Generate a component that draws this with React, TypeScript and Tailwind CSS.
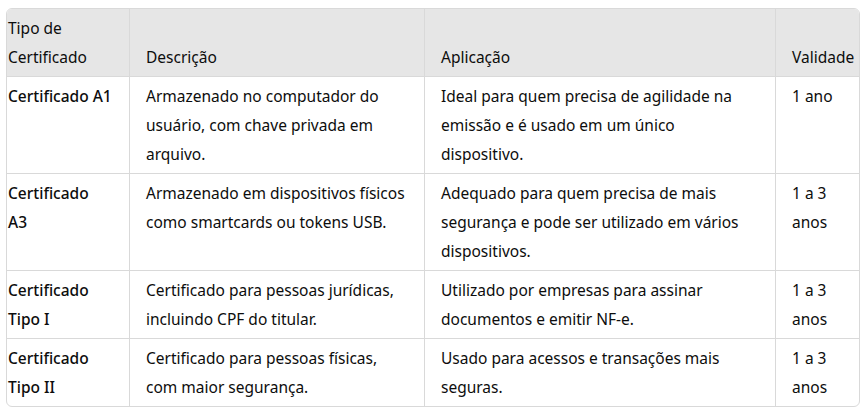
import React from 'react';

const rows = [
  {
    tipo: ['Certificado A1'],
    desc: ['Armazenado no computador do', 'usuário, com chave privada em', 'arquivo.'],
    app: ['Ideal para quem precisa de agilidade na', 'emissão e é usado em um único', 'dispositivo.'],
    val: ['1 ano'],
  },
  {
    tipo: ['Certificado', 'A3'],
    desc: ['Armazenado em dispositivos físicos', 'como smartcards ou tokens USB.'],
    app: ['Adequado para quem precisa de mais', 'segurança e pode ser utilizado em vários', 'dispositivos.'],
    val: ['1 a 3', 'anos'],
  },
  {
    tipo: ['Certificado', 'Tipo I'],
    desc: ['Certificado para pessoas jurídicas,', 'incluindo CPF do titular.'],
    app: ['Utilizado por empresas para assinar', 'documentos e emitir NF-e.'],
    val: ['1 a 3', 'anos'],
  },
  {
    tipo: ['Certificado', 'Tipo II'],
    desc: ['Certificado para pessoas físicas,', 'com maior segurança.'],
    app: ['Usado para acessos e transações mais', 'seguras.'],
    val: ['1 a 3', 'anos'],
  },
];

const Lines = ({ lines }: { lines: string[] }) => (
  <>
    {lines.map((l, i) => (
      <span key={i} className="block whitespace-nowrap">{l}</span>
    ))}
  </>
);

export default function App() {
  return (
    <div className="bg-white w-[865px] h-[412px] pt-[8px] pl-[6px] font-['Noto_Sans',sans-serif] text-[15.5px] leading-[29px] text-[#0d0d0d]">
      <div className="w-[854px] border border-[#d9d9d9] rounded-md overflow-hidden">
        <table className="w-full table-fixed border-separate border-spacing-0">
          <colgroup>
            <col className="w-[123px]" />
            <col className="w-[295px]" />
            <col className="w-[351px]" />
            <col />
          </colgroup>
          <thead>
            <tr className="bg-[#e6e6e6]">
              <th className="align-bottom text-left font-normal pl-[1px] pr-4 py-[4.5px] border-b border-r border-[#d9d9d9]"><Lines lines={['Tipo de', 'Certificado']} /></th>
              <th className="align-bottom text-left font-normal px-4 py-[4.5px] border-b border-r border-[#d9d9d9]">Descrição</th>
              <th className="align-bottom text-left font-normal px-4 py-[4.5px] border-b border-r border-[#d9d9d9]">Aplicação</th>
              <th className="align-bottom text-left font-normal pl-4 pr-0 py-[4.5px] border-b border-[#d9d9d9] whitespace-nowrap">Validade</th>
            </tr>
          </thead>
          <tbody>
            {rows.map((r, i) => {
              const last = i === rows.length - 1;
              return (
                <tr key={i}>
                  <td className={`align-top pl-[1px] pr-4 py-[4.5px] font-medium border-r border-[#d9d9d9] ${last ? '' : 'border-b'}`}><Lines lines={r.tipo} /></td>
                  <td className={`align-top px-4 py-[4.5px] border-r border-[#d9d9d9] ${last ? '' : 'border-b'}`}><Lines lines={r.desc} /></td>
                  <td className={`align-top px-4 py-[4.5px] border-r border-[#d9d9d9] ${last ? '' : 'border-b'}`}><Lines lines={r.app} /></td>
                  <td className={`align-top pl-4 pr-2 py-[4.5px] border-[#d9d9d9] ${last ? '' : 'border-b'}`}><Lines lines={r.val} /></td>
                </tr>
              );
            })}
          </tbody>
        </table>
      </div>
    </div>
  );
}
